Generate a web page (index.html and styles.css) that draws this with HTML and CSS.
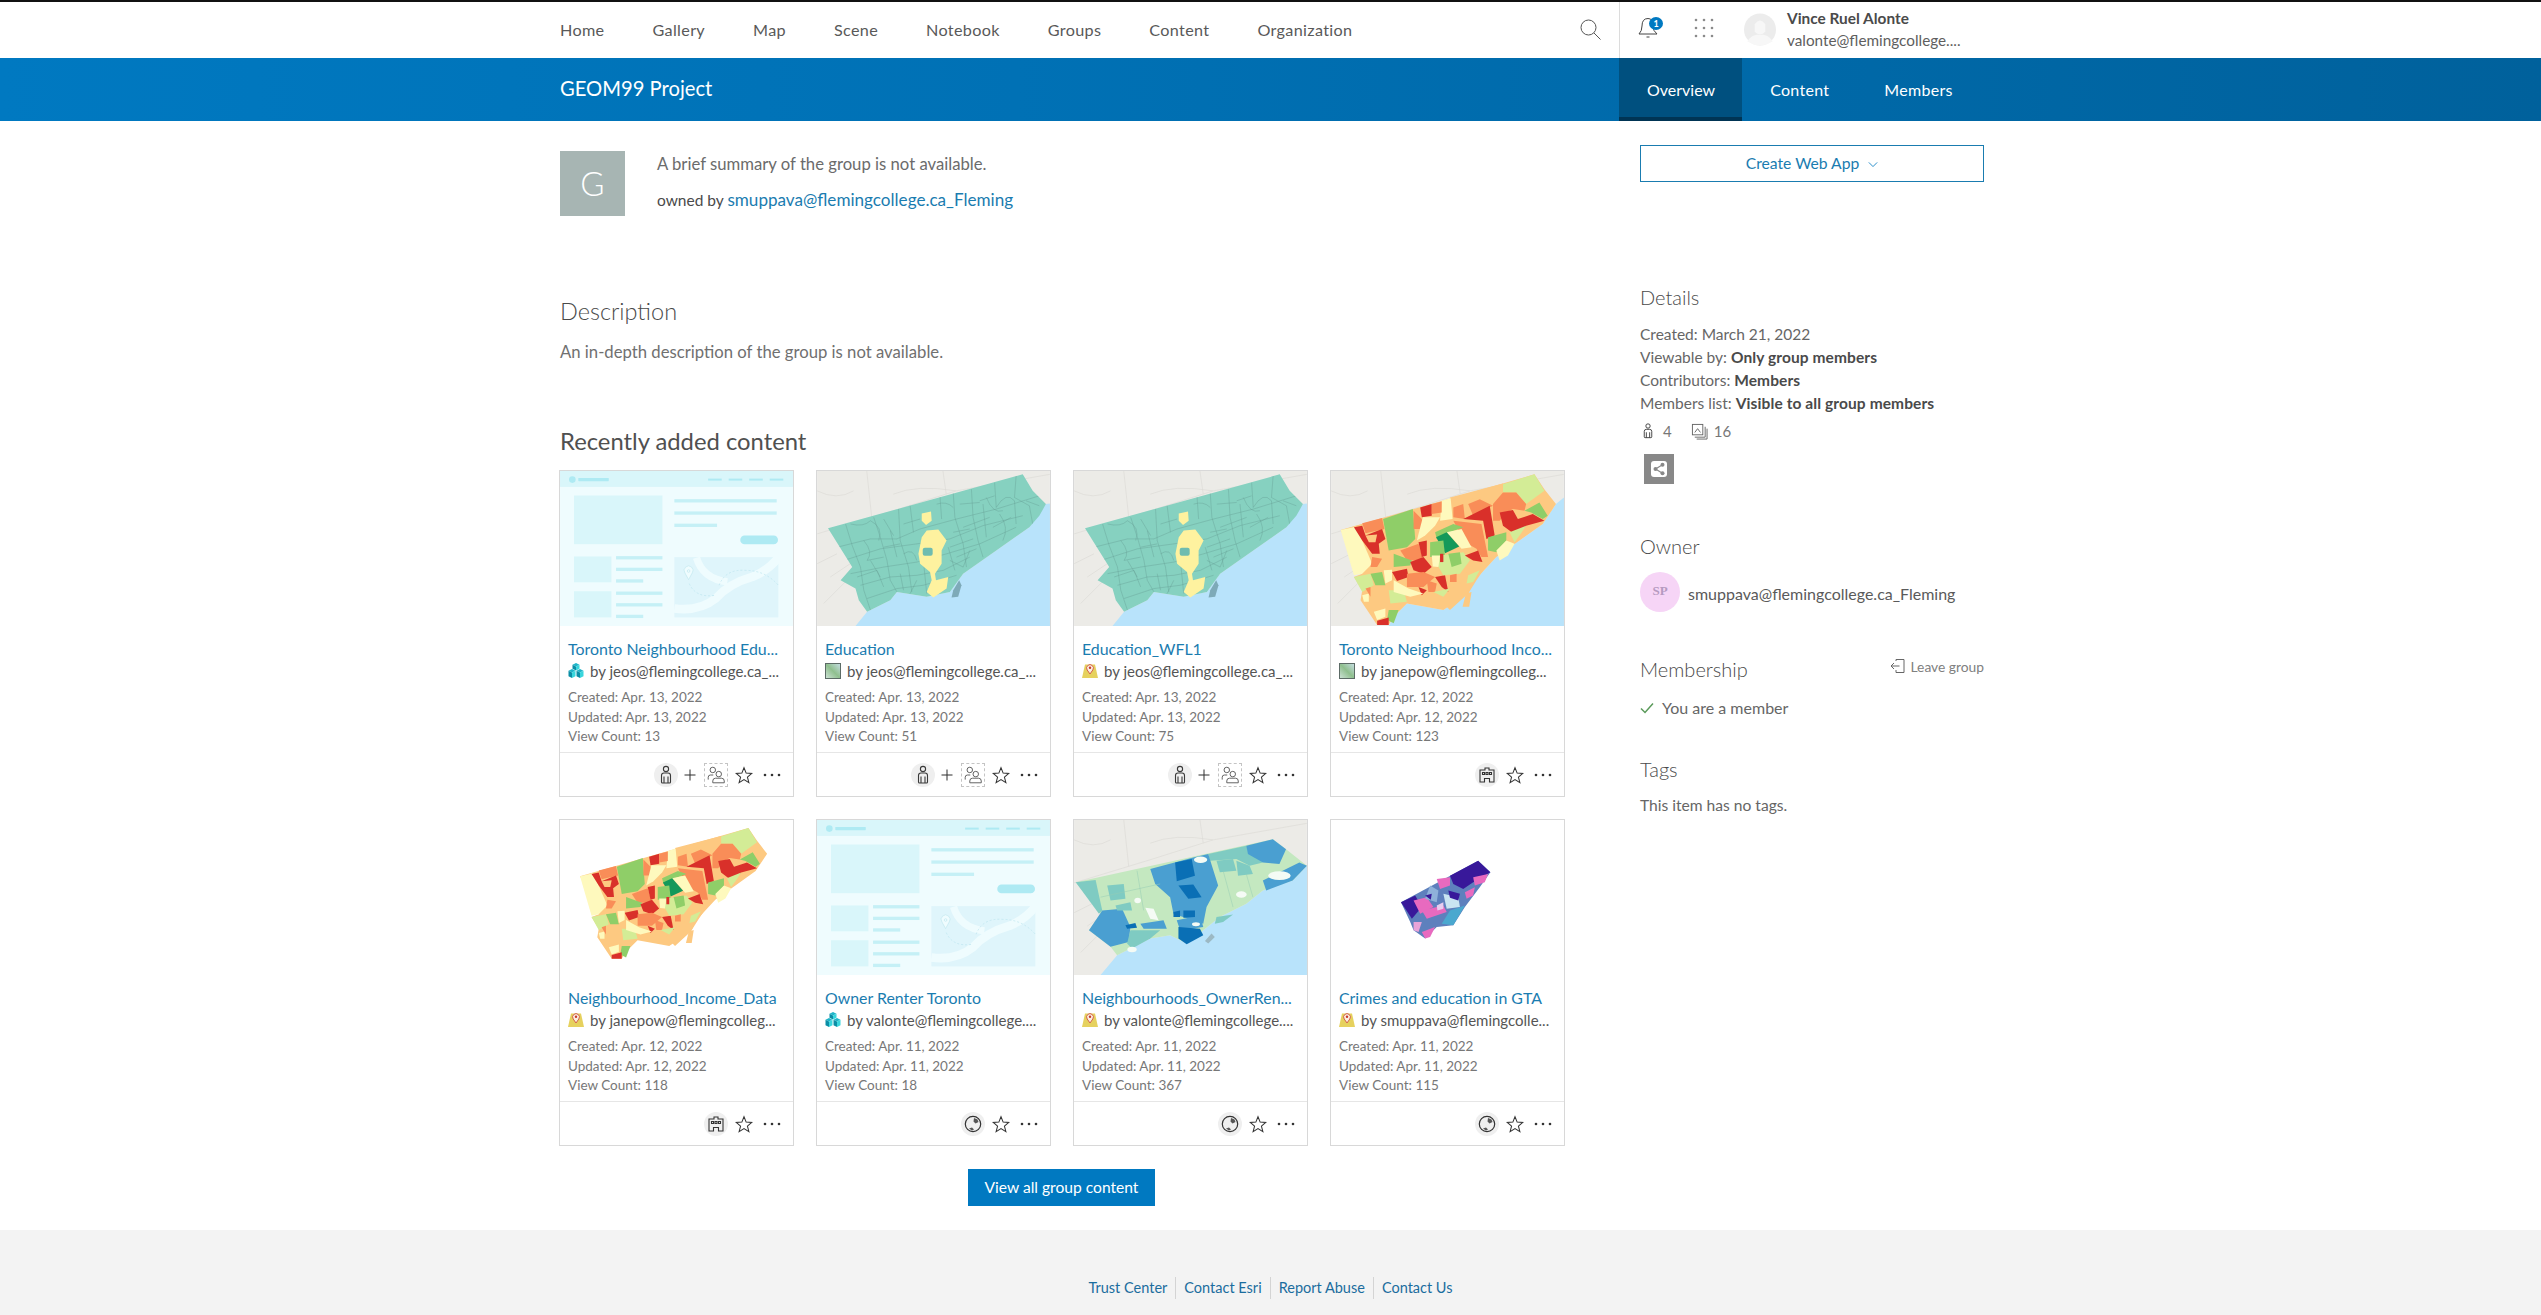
FILE: index.html
```html
<!DOCTYPE html>
<html lang="en">
<head>
<meta charset="utf-8">
<title>GEOM99 Project</title>
<link rel="stylesheet" href="styles.css">
</head>
<body>
<svg class="defs" xmlns="http://www.w3.org/2000/svg" aria-hidden="true">
  <defs>
    <clipPath id="clipGreen"><polygon points="832,203 1420,40 1450,90 1490,130 1470,165 1440,200 1340,270 1240,340 1200,395 1130,410 1040,395 1020,420 950,455 925,420 915,385 870,360 905,320"/></clipPath>
    <linearGradient id="wm" x1="0" y1="1" x2="1" y2="0"><stop offset="0" stop-color="#cfe3d8"/><stop offset=".5" stop-color="#8fbf8e"/><stop offset="1" stop-color="#c8dfe6"/></linearGradient>
  </defs>

  <symbol id="base" viewBox="0 0 703 468">
    <rect width="703" height="468" fill="#ecebe7"/>
    <path d="M150 0 L165 140 M0 190 L230 120 L420 60 L703 10 M230 70 Q300 40 420 60 M380 0 L390 70 M40 320 L130 260 M20 400 L90 330 M0 60 Q60 90 110 60 M0 280 L60 250" stroke="#dcdad6" stroke-width="2" fill="none"/>
  </symbol>

  <symbol id="mapGreen" viewBox="799 30 703 468">
    <use href="#base" x="799" y="30" width="703" height="468"/>
    <polygon fill="#b8e3fb" points="1502,128 1490,130 1440,200 1340,270 1240,340 1200,395 1130,410 1040,395 1020,420 950,455 915,498 1502,498"/>
    <polygon fill="#86d1c0" points="832,203 1420,40 1450,90 1490,130 1470,165 1440,200 1340,270 1240,340 1200,395 1130,410 1040,395 1020,420 950,455 925,420 915,385 870,360 905,320"/>
    <g clip-path="url(#clipGreen)" fill="none" stroke="#659f94" stroke-width="1.200">
      <path d="M860 260 L960 235 L1040 235 L1110 205 L1220 175 L1340 145 L1470 105"/>
      <path d="M880 300 L990 265 L1100 250 L1200 235 L1300 195 L1420 165"/>
      <path d="M900 340 L1000 320 L1100 305 L1190 280 L1290 250 L1400 200"/>
      <path d="M930 375 L1020 350 L1100 345 L1180 330 L1260 290"/>
      <path d="M950 415 L1040 385 L1120 375 L1220 345"/>
      <path d="M885 190 L905 255 L930 320 L940 390 L960 450"/>
      <path d="M970 170 L990 230 L1010 300 L1020 360 L1040 395"/>
      <path d="M1045 145 L1050 240 L1075 320 L1085 395"/>
      <path d="M1210 95 L1215 170 L1240 250 L1250 320"/>
      <path d="M1265 85 L1270 170 L1285 240 L1300 290"/>
      <path d="M1335 65 L1340 140 Q1370 90 1395 120 L1400 190"/>
      <path d="M1400 45 L1395 110 L1440 135 L1450 190"/>
      <path d="M1170 105 L1175 175 M1080 135 L1090 215 M1120 300 L1130 400 M1195 260 L1215 330"/>
      <path d="M900 190 Q940 200 960 180 Q1000 200 985 240 M1310 110 Q1330 160 1360 150"/>
      <path d="M940 240 Q970 275 950 300 L1000 290 M1020 210 L1040 290 M1060 280 Q1090 260 1100 300 M1230 130 L1290 125 M1240 200 L1320 170 M1300 130 L1310 230 M1350 160 Q1380 200 1360 240 M920 350 L980 330 L1000 380 M1000 260 L1050 250 M1200 300 L1240 320 L1260 270 M1100 360 L1080 400 M1160 130 Q1190 120 1210 140"/>
      <path d="M1210 215 L1260 205 M1200 260 L1270 235 M1330 200 L1385 170 M1000 175 L1030 225 M1060 190 L1110 175 M960 300 L990 350 M1050 340 L1060 390 M1220 290 L1280 265 M1430 120 L1470 135 M1290 120 L1335 105"/>
    </g>
    <path fill="#fef29f" d="M1115 158 L1143 152 L1145 180 L1128 193 L1115 180Z M1130 210 L1165 207 L1190 240 L1175 270 L1175 310 L1155 340 L1158 360 L1195 350 L1190 385 L1150 412 L1130 395 L1145 360 L1140 335 L1110 310 L1105 280 L1115 230Z"/>
    <rect x="1118" y="262" width="30" height="24" rx="6" fill="#6fbcb0"/>
    <path fill="#7eaab8" d="M1228 360 L1235 375 L1225 410 L1205 412 L1210 390Z"/>
  </symbol>

  <symbol id="income" viewBox="811 30 703 468">
    <polygon fill="#fdc981" points="840,208 1425,40 1455,85 1490,130 1450,190 1380,240 1310,290 1245,360 1225,400 1150,450 1040,430 1000,470 985,495 950,495 900,420 905,390 880,350 905,340"/>
    <polygon fill="#fef9bd" points="840,208 885,198 905,240 935,310 905,340 880,345"/>
    <polygon fill="#f98d58" points="905,188 965,172 972,205 915,218"/>
    <polygon fill="#d9302a" points="880,200 905,195 915,225 965,205 975,235 955,250 958,280 935,280 905,240"/>
    <polygon fill="#fdc981" points="915,225 950,222 945,245 925,245"/>
    <polygon fill="#8fce68" points="968,175 1058,145 1065,235 1040,260 985,270"/>
    <polygon fill="#d3ec96" points="1330,70 1425,40 1455,90 1400,130 1370,95 1330,95"/>
    <polygon fill="#fdc981" points="1170,110 1330,68 1330,100 1300,135 1260,110 1210,120 1175,145"/>
    <polygon fill="#fef9bd" points="1145,120 1172,112 1178,175 1140,180"/>
    <polygon fill="#d9302a" points="1080,140 1115,130 1115,165 1085,170"/>
    <polygon fill="#f98d58" points="1115,130 1145,122 1145,155 1115,160"/>
    <polygon fill="#f98d58" points="1060,150 1085,175 1090,205 1060,205"/>
    <polygon fill="#fef9bd" points="1088,170 1140,170 1125,195 1095,225 1070,240"/>
    <polygon fill="#f98d58" points="1180,140 1210,130 1215,175 1180,170"/>
    <polygon fill="#f98d58" points="1225,130 1260,115 1300,135 1240,165"/>
    <polygon fill="#f98d58" points="1300,130 1330,95 1370,95 1400,130 1395,150 1360,145 1340,155 1320,180 1300,180"/>
    <polygon fill="#f98d58" points="1180,180 1265,190 1285,290 1265,290 1250,265 1215,245"/>
    <polygon fill="#d9302a" points="1210,175 1290,135 1305,225 1280,235 1270,180"/>
    <polygon fill="#d9302a" points="1320,155 1360,148 1375,175 1420,160 1455,180 1400,195 1370,225 1330,195"/>
    <polygon fill="#8fce68" points="1395,150 1440,125 1465,165 1450,175 1415,155"/>
    <polygon fill="#8fce68" points="1125,215 1180,190 1210,200 1170,215 1130,235"/>
    <polygon fill="#fef9bd" points="1160,215 1205,205 1235,260 1205,265"/>
    <polygon fill="#14995a" points="1128,230 1160,215 1198,258 1155,278"/>
    <polygon fill="#8fce68" points="1285,230 1340,215 1340,240 1310,275 1285,270"/>
    <polygon fill="#8fce68" points="1110,245 1150,240 1155,285 1110,290"/>
    <polygon fill="#f98d58" points="1020,270 1075,250 1090,300 1040,300"/>
    <polygon fill="#d9302a" points="1075,245 1100,240 1100,285 1085,290"/>
    <polygon fill="#8fce68" points="1000,280 1055,300 1050,315 1000,320"/>
    <polygon fill="#d9302a" points="1050,305 1090,290 1115,320 1090,340 1060,330"/>
    <polygon fill="#d9302a" points="995,335 1040,325 1045,350 1010,362"/>
    <polygon fill="#f98d58" points="1040,340 1090,335 1125,350 1090,380 1040,380"/>
    <polygon fill="#d9302a" points="1125,350 1155,345 1165,395 1145,380"/>
    <polygon fill="#d9302a" points="1075,380 1100,390 1085,405"/>
    <polygon fill="#f98d58" points="1100,360 1130,370 1125,395 1105,395"/>
    <polygon fill="#d3ec96" points="1140,285 1210,275 1230,300 1200,340 1150,345 1130,310"/>
    <polygon fill="#8fce68" points="1165,280 1200,275 1205,310 1175,320"/>
    <polygon fill="#fef9bd" points="1115,285 1140,285 1135,320 1118,318"/>
    <polygon fill="#d9302a" points="1215,285 1255,270 1268,305 1240,300"/>
    <polygon fill="#d9302a" points="1140,280 1150,280 1150,305 1140,305"/>
    <polygon fill="#fdc981" points="1230,320 1290,300 1250,360 1225,400 1170,450 1140,420 1165,395 1200,370"/>
    <polygon fill="#d3ec96" points="1225,345 1260,330 1240,365 1220,370"/>
    <polygon fill="#f98d58" points="1170,345 1190,340 1190,365 1170,365"/>
    <polygon fill="#fef9bd" points="1310,270 1340,240 1365,250 1345,285 1320,300"/>
    <polygon fill="#d3ec96" points="1350,215 1400,195 1380,225 1365,245"/>
    <polygon fill="#f98d58" points="935,290 965,295 950,320 930,320"/>
    <polygon fill="#d3ec96" points="880,350 930,340 940,375 905,395"/>
    <polygon fill="#8fce68" points="930,340 965,335 975,375 945,375"/>
    <polygon fill="#fef9bd" points="970,330 995,328 995,360 975,370"/>
    <polygon fill="#d3ec96" points="985,390 1030,390 1040,425 990,430"/>
    <polygon fill="#8fce68" points="985,450 1015,450 1000,490 980,480"/>
    <polygon fill="#fef9bd" points="940,455 975,445 975,470 950,480"/>
    <polygon fill="#d9302a" points="950,482 985,472 985,495 950,495"/>
    <polygon fill="#fef9bd" points="1000,360 1045,385 1090,400 1050,410 1000,395"/>
    <polygon fill="#d3ec96" points="1120,395 1170,385 1150,410"/>
    <polygon fill="#fef9bd" points="905,405 925,400 925,425 910,425"/>
    <polygon fill="#f98d58" points="915,385 930,380 930,410"/>
    <polygon fill="#fdc981" points="1218,400 1235,395 1228,440 1208,440"/>
  </symbol>

  <symbol id="mapIncome" viewBox="811 30 703 468">
    <use href="#base" x="811" y="30" width="703" height="468"/>
    <polygon fill="#b8e3fb" points="1514,110 1490,130 1450,190 1380,240 1310,290 1245,360 1225,400 1150,450 1040,430 1000,470 985,498 1514,498"/>
    <use href="#income" x="811" y="30" width="703" height="468"/>
  </symbol>

  <symbol id="mapBlue" viewBox="40 27 703 468">
    <use href="#base" x="40" y="27" width="703" height="468"/>
    <polygon fill="#b8e3fb" points="743,165 700,210 610,240 560,280 480,320 430,360 380,400 330,375 270,385 200,420 170,435 120,495 743,495"/>
    <polygon fill="#c4e8c0" points="45,215 640,85 680,115 743,165 700,210 610,240 560,280 480,320 430,360 380,400 330,375 270,385 200,420 170,435 150,410 85,360 120,310"/>
    <polygon fill="#7fcbc2" points="45,215 105,208 125,300 115,310"/>
    <polygon fill="#7fcbc2" points="445,130 560,105 610,155 570,165 530,145 450,150"/>
    <polygon fill="#4a9fd1" points="560,105 640,85 680,115 660,160 610,155 565,130"/>
    <polygon fill="#4a9fd1" points="610,210 720,155 743,165 700,210 620,240"/>
    <polygon fill="#7fcbc2" points="530,150 570,165 580,190 535,195"/>
    <polygon fill="#7fcbc2" points="470,150 520,145 530,180 480,185"/>
    <polygon fill="#4a9fd1" points="270,175 400,140 445,130 475,225 440,290 430,340 340,310 330,260 285,220"/>
    <polygon fill="#0a6fb5" points="345,155 395,145 405,195 350,212"/>
    <polygon fill="#0a6fb5" points="355,225 400,222 425,260 385,265"/>
    <polygon fill="#4a9fd1" points="85,360 125,300 185,295 210,350 205,395 150,410"/>
    <polygon fill="#7fcbc2" points="210,360 300,360 270,385 215,415 200,400"/>
    <polygon fill="#0a6fb5" points="195,345 225,338 230,352 200,355"/>
    <polygon fill="#4a9fd1" points="240,340 310,330 320,355 250,355"/>
    <polygon fill="#7fcbc2" points="140,225 190,220 195,265 150,270"/>
    <polygon fill="#7fcbc2" points="165,285 210,275 215,300 170,300"/>
    <polygon fill="#4a9fd1" points="350,330 420,315 430,350 360,360"/>
    <polygon fill="#0a6fb5" points="340,305 360,300 360,320 340,320"/>
    <polygon fill="#0a6fb5" points="370,300 405,300 405,320 370,322"/>
    <polygon fill="#0a6fb5" points="355,350 420,355 430,375 380,402 355,385"/>
    <polygon fill="#7fcbc2" points="470,320 520,312 490,335 465,340"/>
    <g fill="#f5fbf5"><ellipse cx="660" cy="195" rx="34" ry="13"/><ellipse cx="422" cy="147" rx="20" ry="10"/><ellipse cx="545" cy="252" rx="16" ry="10"/><ellipse cx="232" cy="270" rx="10" ry="8"/><path d="M255 292 L280 295 L295 330 L270 325Z"/><ellipse cx="215" cy="418" rx="14" ry="8"/><ellipse cx="408" cy="342" rx="12" ry="6"/></g>
    <path d="M120 260 L300 220 M230 180 L250 300 M490 180 L520 290 M560 190 L580 260" stroke="#96ccb4" stroke-width="1.500" fill="none"/>
    <path fill="#9cb9c4" d="M455 370 L465 380 L445 400 L435 392Z"/>
  </symbol>

  <symbol id="mapPurple" viewBox="811 27 703 468">
    <polygon fill="#5e80bd" points="1022,275 1255,150 1292,185 1260,230 1215,290 1180,345 1130,350 1095,385 1060,360 1050,335"/>
    <polygon fill="#38189a" points="1022,275 1065,255 1085,290 1055,325"/>
    <polygon fill="#38189a" points="1170,195 1255,150 1292,185 1240,215 1210,235 1180,220"/>
    <polygon fill="#e86abf" points="1240,200 1285,190 1275,215 1245,225"/>
    <polygon fill="#e86abf" points="1060,270 1100,260 1120,290 1080,310"/>
    <polygon fill="#e86abf" points="1130,205 1170,200 1170,225 1140,235"/>
    <polygon fill="#c9e5f2" points="1150,250 1195,260 1200,290 1160,295"/>
    <polygon fill="#38189a" points="1165,240 1200,250 1195,270 1170,262"/>
    <polygon fill="#e86abf" points="1085,300 1150,285 1160,305 1100,325"/>
    <polygon fill="#4aa8cf" points="1170,300 1215,285 1180,345 1145,340"/>
    <polygon fill="#e86abf" points="1085,365 1125,350 1110,380 1095,385"/>
    <polygon fill="#e8a3d8" points="1060,335 1085,335 1075,365 1060,360"/>
    <polygon fill="#8fb1da" points="1110,225 1135,240 1130,275 1095,265"/>
    <polygon fill="#e86abf" points="1215,245 1245,230 1240,255 1220,265"/>
    <polygon fill="#e9cdf0" points="1130,285 1150,275 1150,295 1132,300"/>
    <polygon fill="#38189a" points="1095,255 1115,250 1112,268"/>
  </symbol>

  <symbol id="appThumb" viewBox="0 0 703 468">
    <rect width="703" height="468" fill="#effcfe"/>
    <rect width="703" height="48" fill="#d9f6fa"/>
    <circle cx="37" cy="26" r="10" fill="#aeeaf3"/>
    <g fill="#aeeaf3">
      <rect x="55" y="21" width="92" height="10" rx="2"/><rect x="447" y="23" width="41" height="6"/><rect x="509" y="23" width="41" height="6"/><rect x="571" y="23" width="41" height="6"/><rect x="633" y="23" width="41" height="6"/>
      <rect x="544" y="195" width="114" height="26" rx="13"/>
    </g>
    <g fill="#d9f6fa">
      <rect x="42" y="74" width="267" height="147"/><rect x="42" y="258" width="113" height="78"/><rect x="42" y="363" width="113" height="79"/>
    </g>
    <g fill="#c5f0f6">
      <rect x="345" y="85" width="309" height="10"/><rect x="345" y="122" width="309" height="10"/><rect x="345" y="159" width="129" height="10"/>
      <rect x="169" y="257" width="140" height="10"/><rect x="169" y="292" width="140" height="10"/><rect x="169" y="327" width="82" height="10"/>
      <rect x="169" y="364" width="140" height="10"/><rect x="169" y="399" width="140" height="10"/><rect x="169" y="434" width="82" height="10"/>
    </g>
    <rect x="345" y="260" width="314" height="182" fill="#dff5fb"/>
    <path d="M345 415 Q420 425 470 385 Q510 340 580 320 Q630 300 662 258" fill="none" stroke="#effcfe" stroke-width="26"/>
    <path d="M505 335 Q430 325 412 262" fill="none" stroke="#effcfe" stroke-width="22"/>
    <path d="M390 340 Q410 385 470 375 M480 345 Q500 295 560 300 Q620 300 659 345" fill="none" stroke="#b9e4ef" stroke-width="2" stroke-dasharray="6 6"/>
    <path d="M388 328 L377 308 A13.500 13.500 0 1 1 399 308Z" fill="#effcfe" stroke="#bfe6ee" stroke-width="2"/>
    <circle cx="388" cy="302" r="4" fill="none" stroke="#bfe6ee" stroke-width="2"/>
  </symbol>

  <symbol id="iCubes" viewBox="0 0 16 16">
    <path fill="#1fb5c9" d="M8 0 L11.500 1.800 L8 3.600 L4.500 1.800Z M4 6 L7.500 7.800 L4 9.600 L0.500 7.800Z M12 6 L15.500 7.800 L12 9.600 L8.500 7.800Z"/>
    <path fill="#0a8ea6" d="M4.500 1.800 L8 3.600 V7.500 L4.500 5.700Z M0.500 7.800 L4 9.600 V15 L0.500 13.200Z M8.500 7.800 L12 9.600 V15 L8.500 13.200Z"/>
    <path fill="#38d6dd" d="M11.500 1.800 V5.700 L8 7.500 V3.600Z M7.500 7.800 V13.200 L4 15 V9.600Z M15.500 7.800 V13.200 L12 15 V9.600Z"/>
  </symbol>
  <symbol id="iWebmap" viewBox="0 0 16 16">
    <rect x="0.500" y="0.500" width="15" height="15" fill="url(#wm)" stroke="#5c6b66"/>
  </symbol>
  <symbol id="iFeature" viewBox="0 0 16 16">
    <path fill="#e6d15e" d="M3 1.500 H13 L16 15 H0Z"/>
    <path fill="#fbeee0" stroke="#d2604a" d="M8 11 L5.200 7 A3.400 3.400 0 1 1 10.800 7Z"/>
    <circle cx="8" cy="4.800" r="1.200" fill="#c8382c"/>
  </symbol>

  <symbol id="iUser" viewBox="0 0 24 24">
    <g fill="none" stroke="#3a3a3a" stroke-width="1.100">
      <circle cx="12" cy="6" r="2.600"/>
      <path d="M7.500 19 V12.500 A2.500 2.500 0 0 1 10 10 H14 A2.500 2.500 0 0 1 16.500 12.500 V19 A1 1 0 0 1 15.500 20 H8.500 A1 1 0 0 1 7.500 19Z M10 13.500 V20 M14 13.500 V20"/>
    </g>
  </symbol>
  <symbol id="iPlus" viewBox="0 0 24 24"><path d="M12 6.500 V17.500 M6.500 12 H17.500" stroke="#2f2f2f" stroke-width="1" fill="none"/></symbol>
  <symbol id="iGroup" viewBox="0 0 24 24">
    <g fill="none" stroke="#555" stroke-width="1">
      <circle cx="8.500" cy="6.500" r="3"/><circle cx="15" cy="11" r="3"/>
      <path d="M3.500 17 V14.500 A2.500 2.500 0 0 1 6 12 H9 M8.500 20.500 V18.500 A3 3 0 0 1 11.500 15.500 H18 A3 3 0 0 1 21 18.500 V20.500Z"/>
    </g>
  </symbol>
  <symbol id="iStar" viewBox="-2 -2 28 28"><path d="M12 3.500 L14.500 9.800 L21 10.200 L16 14.500 L17.700 21 L12 17.300 L6.300 21 L8 14.500 L3 10.200 L9.500 9.800Z" fill="none" stroke="#333" stroke-width="1.200"/></symbol>
  <symbol id="iDots" viewBox="0 0 24 24"><g fill="#333"><circle cx="5" cy="12" r="1.300"/><circle cx="12" cy="12" r="1.300"/><circle cx="19" cy="12" r="1.300"/></g></symbol>
  <symbol id="iOrg" viewBox="0 0 24 24">
    <g fill="none" stroke="#333" stroke-width="1.100">
      <path d="M5 19 V7 H10 V5 H14 V7 H19 V19 H14.500 V15.500 H9.500 V19Z"/>
      <path d="M7.500 9.500 H9.500 V11.500 H7.500Z M11 9.500 H13 V11.500 H11Z M14.500 9.500 H16.500 V11.500 H14.500Z"/>
    </g>
  </symbol>
  <symbol id="iGlobe" viewBox="0 0 24 24">
    <circle cx="12" cy="12" r="7.700" fill="none" stroke="#333" stroke-width="1.200"/>
    <path d="M13 6 L16.500 7.500 L17.500 10 L14.500 11.500 L12.500 9.500Z M8 16.500 L11 15.500 L13 17.500 L11 18.500Z" fill="#555"/>
  </symbol>
  <symbol id="iStack" viewBox="0 0 18 18">
    <g fill="none" stroke="#666" stroke-width="1">
      <rect x="1.500" y="1.500" width="11" height="11"/>
      <path d="M4 10 L7 6 L10 10 M15 4 V15 H4 M17 6 V17 H6"/>
    </g>
  </symbol>
</svg>

<header class="topbar">
  <div class="wrap topbar-inner">
    <nav class="mainnav">
      <a class="navlink">Home</a>
      <a class="navlink">Gallery</a>
      <a class="navlink">Map</a>
      <a class="navlink">Scene</a>
      <a class="navlink">Notebook</a>
      <a class="navlink">Groups</a>
      <a class="navlink">Content</a>
      <a class="navlink">Organization</a>
    </nav>
    <div class="tools">
      <svg class="search" viewBox="0 0 21 21"><circle cx="8.500" cy="8.500" r="7.500" fill="none" stroke="#555" stroke-width="1"/><path d="M14 14 L20.500 20.500" stroke="#555" stroke-width="1"/></svg>
      <div class="usertools">
        <div class="bell">
          <svg viewBox="0 0 20 24" class="bell-icon"><path d="M1 18 Q4 15 4 10 Q4 2.500 10 2.500 Q15 2.500 15 10 Q15 15 19 18Z M8.500 21 H11.500" fill="none" stroke="#444" stroke-width="1"/></svg>
          <span class="badge">1</span>
        </div>
        <svg class="apps" viewBox="0 0 20 20"><g fill="#8a8a8a"><circle cx="2" cy="2" r="1.300"/><circle cx="10" cy="2" r="1.300"/><circle cx="18" cy="2" r="1.300"/><circle cx="2" cy="10" r="1.300"/><circle cx="10" cy="10" r="1.300"/><circle cx="18" cy="10" r="1.300"/><circle cx="2" cy="18" r="1.300"/><circle cx="10" cy="18" r="1.300"/><circle cx="18" cy="18" r="1.300"/></g></svg>
        <svg class="avatar" viewBox="0 0 30 30"><circle cx="15" cy="15" r="15" fill="#ececec"/><path d="M10 10 Q15 3 20 10 L20 17 Q15 22 10 17Z M3 26 Q8 20 12 20 H18 Q22 20 27 26 Q15 34 3 26Z" fill="#f7f7f7"/></svg>
        <div class="userinfo">
          <div class="username">Vince Ruel Alonte</div>
          <div class="useremail">valonte@flemingcollege....</div>
        </div>
      </div>
    </div>
  </div>
</header>

<div class="band">
  <div class="wrap band-inner">
    <h1 class="grouptitle">GEOM99 Project</h1>
    <nav class="tabs">
      <a class="tab tab-active">Overview</a>
      <a class="tab">Content</a>
      <a class="tab">Members</a>
    </nav>
  </div>
</div>

<main class="wrap main">
  <div class="leftcol">
    <section class="summary">
      <div class="gthumb">G</div>
      <div class="summary-text">
        <p class="summary-line">A brief summary of the group is not available.</p>
        <p class="owned">owned by <a class="link">smuppava@flemingcollege.ca_Fleming</a></p>
      </div>
    </section>
    <h2 class="h-desc">Description</h2>
    <p class="desc">An in-depth description of the group is not available.</p>
    <h2 class="h-recent">Recently added content</h2>

    <div class="cards">
      <article class="card">
        <svg class="thumb"><use href="#appThumb"/></svg>
        <div class="card-body">
          <div class="card-title">Toronto Neighbourhood Edu...</div>
          <div class="card-by"><svg class="type"><use href="#iCubes"/></svg><span class="by">by jeos@flemingcollege.ca_...</span></div>
          <div class="meta first">Created: Apr. 13, 2022</div>
          <div class="meta">Updated: Apr. 13, 2022</div>
          <div class="meta last">View Count: 13</div>
        </div>
        <div class="actions">
          <span class="circ"><svg class="ai"><use href="#iUser"/></svg></span>
          <svg class="ai ai-plus"><use href="#iPlus"/></svg>
          <span class="dash"><svg class="ai"><use href="#iGroup"/></svg></span>
          <svg class="ai"><use href="#iStar"/></svg>
          <svg class="ai"><use href="#iDots"/></svg>
        </div>
      </article>
      <article class="card">
        <svg class="thumb"><use href="#mapGreen"/></svg>
        <div class="card-body">
          <div class="card-title">Education</div>
          <div class="card-by"><svg class="type"><use href="#iWebmap"/></svg><span class="by">by jeos@flemingcollege.ca_...</span></div>
          <div class="meta first">Created: Apr. 13, 2022</div>
          <div class="meta">Updated: Apr. 13, 2022</div>
          <div class="meta last">View Count: 51</div>
        </div>
        <div class="actions">
          <span class="circ"><svg class="ai"><use href="#iUser"/></svg></span>
          <svg class="ai ai-plus"><use href="#iPlus"/></svg>
          <span class="dash"><svg class="ai"><use href="#iGroup"/></svg></span>
          <svg class="ai"><use href="#iStar"/></svg>
          <svg class="ai"><use href="#iDots"/></svg>
        </div>
      </article>
      <article class="card">
        <svg class="thumb"><use href="#mapGreen"/></svg>
        <div class="card-body">
          <div class="card-title">Education_WFL1</div>
          <div class="card-by"><svg class="type"><use href="#iFeature"/></svg><span class="by">by jeos@flemingcollege.ca_...</span></div>
          <div class="meta first">Created: Apr. 13, 2022</div>
          <div class="meta">Updated: Apr. 13, 2022</div>
          <div class="meta last">View Count: 75</div>
        </div>
        <div class="actions">
          <span class="circ"><svg class="ai"><use href="#iUser"/></svg></span>
          <svg class="ai ai-plus"><use href="#iPlus"/></svg>
          <span class="dash"><svg class="ai"><use href="#iGroup"/></svg></span>
          <svg class="ai"><use href="#iStar"/></svg>
          <svg class="ai"><use href="#iDots"/></svg>
        </div>
      </article>
      <article class="card">
        <svg class="thumb"><use href="#mapIncome"/></svg>
        <div class="card-body">
          <div class="card-title">Toronto Neighbourhood Inco...</div>
          <div class="card-by"><svg class="type"><use href="#iWebmap"/></svg><span class="by">by janepow@flemingcolleg...</span></div>
          <div class="meta first">Created: Apr. 12, 2022</div>
          <div class="meta">Updated: Apr. 12, 2022</div>
          <div class="meta last">View Count: 123</div>
        </div>
        <div class="actions">
          <span class="circ"><svg class="ai"><use href="#iOrg"/></svg></span>
          <svg class="ai"><use href="#iStar"/></svg>
          <svg class="ai"><use href="#iDots"/></svg>
        </div>
      </article>
      <article class="card">
        <svg class="thumb" viewBox="0 0 703 468"><use href="#income" x="35" y="15" width="611" height="407"/></svg>
        <div class="card-body">
          <div class="card-title">Neighbourhood_Income_Data</div>
          <div class="card-by"><svg class="type"><use href="#iFeature"/></svg><span class="by">by janepow@flemingcolleg...</span></div>
          <div class="meta first">Created: Apr. 12, 2022</div>
          <div class="meta">Updated: Apr. 12, 2022</div>
          <div class="meta last">View Count: 118</div>
        </div>
        <div class="actions">
          <span class="circ"><svg class="ai"><use href="#iOrg"/></svg></span>
          <svg class="ai"><use href="#iStar"/></svg>
          <svg class="ai"><use href="#iDots"/></svg>
        </div>
      </article>
      <article class="card">
        <svg class="thumb"><use href="#appThumb"/></svg>
        <div class="card-body">
          <div class="card-title">Owner Renter Toronto</div>
          <div class="card-by"><svg class="type"><use href="#iCubes"/></svg><span class="by">by valonte@flemingcollege....</span></div>
          <div class="meta first">Created: Apr. 11, 2022</div>
          <div class="meta">Updated: Apr. 11, 2022</div>
          <div class="meta last">View Count: 18</div>
        </div>
        <div class="actions">
          <span class="circ"><svg class="ai"><use href="#iGlobe"/></svg></span>
          <svg class="ai"><use href="#iStar"/></svg>
          <svg class="ai"><use href="#iDots"/></svg>
        </div>
      </article>
      <article class="card">
        <svg class="thumb"><use href="#mapBlue"/></svg>
        <div class="card-body">
          <div class="card-title">Neighbourhoods_OwnerRen...</div>
          <div class="card-by"><svg class="type"><use href="#iFeature"/></svg><span class="by">by valonte@flemingcollege....</span></div>
          <div class="meta first">Created: Apr. 11, 2022</div>
          <div class="meta">Updated: Apr. 11, 2022</div>
          <div class="meta last">View Count: 367</div>
        </div>
        <div class="actions">
          <span class="circ"><svg class="ai"><use href="#iGlobe"/></svg></span>
          <svg class="ai"><use href="#iStar"/></svg>
          <svg class="ai"><use href="#iDots"/></svg>
        </div>
      </article>
      <article class="card">
        <svg class="thumb"><use href="#mapPurple"/></svg>
        <div class="card-body">
          <div class="card-title">Crimes and education in GTA</div>
          <div class="card-by"><svg class="type"><use href="#iFeature"/></svg><span class="by">by smuppava@flemingcolle...</span></div>
          <div class="meta first">Created: Apr. 11, 2022</div>
          <div class="meta">Updated: Apr. 11, 2022</div>
          <div class="meta last">View Count: 115</div>
        </div>
        <div class="actions">
          <span class="circ"><svg class="ai"><use href="#iGlobe"/></svg></span>
          <svg class="ai"><use href="#iStar"/></svg>
          <svg class="ai"><use href="#iDots"/></svg>
        </div>
      </article>
    </div>
    <div class="viewall-row"><a class="viewall">View all group content</a></div>
  </div>

  <aside class="rightcol">
    <a class="createapp">Create Web App <svg class="chev" viewBox="0 0 12 8"><path d="M1 1.500 L6 6.500 L11 1.500" fill="none" stroke="#0079c1" stroke-width="1"/></svg></a>
    <h3 class="sidehead details-head">Details</h3>
    <div class="facts">
      <div>Created: March 21, 2022</div>
      <div>Viewable by: <b class="strong">Only group members</b></div>
      <div>Contributors: <b class="strong">Members</b></div>
      <div>Members list: <b class="strong">Visible to all group members</b></div>
    </div>
    <div class="counts">
      <svg class="count-icon"><use href="#iUser"/></svg><span class="count-num">4</span>
      <svg class="count-icon stack"><use href="#iStack"/></svg><span class="count-num">16</span>
    </div>
    <div class="share"><svg viewBox="0 0 16 16" class="share-icon"><rect width="16" height="16" rx="3" fill="#fff"/><g fill="#888"><circle cx="11.500" cy="3.800" r="2"/><circle cx="11.500" cy="12.200" r="2"/><circle cx="4.500" cy="8" r="2"/></g><path d="M11.500 3.800 L4.500 8 L11.500 12.200" stroke="#888" stroke-width="1.200" fill="none"/></svg></div>
    <h3 class="sidehead owner-head">Owner</h3>
    <div class="owner">
      <div class="owner-av">SP</div>
      <span class="owner-name">smuppava@flemingcollege.ca_Fleming</span>
    </div>
    <div class="member-head">
      <h3 class="sidehead">Membership</h3>
      <a class="leave"><svg class="leave-icon" viewBox="0 0 16 16"><path d="M6 3 V1.500 H14 V14.500 H6 V12 M9.500 8 H1 M4 5 L1 8 L4 11" fill="none" stroke="#666" stroke-width="1"/></svg>Leave group</a>
    </div>
    <div class="member-line"><svg class="check" viewBox="0 0 14 12"><path d="M1 6.500 L5 10.500 L13 1.500" fill="none" stroke="#5a9a5a" stroke-width="1.500"/></svg>You are a member</div>
    <h3 class="sidehead tags-head">Tags</h3>
    <p class="notags">This item has no tags.</p>
  </aside>
</main>

<footer class="footer">
  <a class="flink">Trust Center</a>
  <a class="flink">Contact Esri</a>
  <a class="flink">Report Abuse</a>
  <a class="flink">Contact Us</a>
</footer>
</body>
</html>
```

FILE: styles.css
```css
* { box-sizing: border-box; }
html, body { margin: 0; padding: 0; }
body {
  font-family: "Lato", "Liberation Sans", sans-serif;
  color: #4a4a4a;
  background: #fff;
  overflow-x: hidden;
}
.defs { display: block; width: 0; height: 0; overflow: hidden; }
.wrap { width: 1421px; margin: 0 auto; }
h1, h2, h3, p { margin: 0; font-weight: 400; }

/* top bar */
.topbar { height: 58px; border-top: 2px solid #111; background: #fff; }
.topbar-inner { display: flex; height: 56px; }
.mainnav { width: 1020px; display: flex; gap: 48px; align-items: center; padding-bottom: 2px; }
.navlink { font-size: 16.200px; font-weight: 400; color: #595959; letter-spacing: .33px; }
.tools { display: flex; align-items: stretch; }
.search { width: 21px; height: 21px; margin-top: 17px; }
.usertools { display: flex; margin-left: 18px; border-left: 1px solid #dcdcdc; padding-left: 18px; }
.bell { position: relative; width: 20px; margin-top: 14px; }
.bell-icon { display: block; width: 20px; height: 24px; }
.badge {
  position: absolute; left: 11px; top: 1px; width: 14px; height: 13px; border-radius: 50%;
  background: #0079c1; color: #fff; font-size: 9px; font-weight: 700; line-height: 13px; text-align: center;
}
.apps { width: 20px; height: 20px; margin: 16px 0 0 36px; }
.avatar { width: 32px; height: 33px; margin: 11px 0 0 30px; }
.userinfo { margin-left: 11px; padding-top: 5px; }
.username { font-size: 15.400px; font-weight: 700; color: #4a4a4a; line-height: 22px; }
.useremail { font-size: 15.300px; font-weight: 400; color: #5e5e5e; line-height: 22px; }

/* band */
.band { height: 63px; background: linear-gradient(90deg, #0079c1 0%, #0071b5 40%, #00619c 100%); }
.band-inner { display: flex; height: 63px; }
.grouptitle { width: 1059px; font-size: 20.200px; font-weight: 400; line-height: 61px; color: #fff; }
.tabs { display: flex; }
.tab { padding: 0 27px 0 28px; font-size: 16px; font-weight: 400; color: #fff; line-height: 63px; letter-spacing: .3px; }
.tab-active { background: #00507f; border-bottom: 4px solid #003454; letter-spacing: 0; }

/* main */
.main { display: flex; }
.leftcol { width: 1080px; padding-top: 30px; padding-bottom: 24px; }
.summary { display: flex; }
.gthumb { width: 65px; height: 65px; background: #a7b5b3; color: #fff; font-size: 33px; font-weight: 300; line-height: 65px; text-align: center; }
.summary-text { margin-left: 32px; }
.summary-line { font-size: 16.700px; font-weight: 400; color: #6b6b6b; line-height: 26px; }
.owned { font-size: 15.500px; font-weight: 400; color: #4a4a4a; line-height: 26px; margin-top: 10px; }
.link { color: #1a7cb0; font-size: 17.100px; }
.h-desc { margin-top: 80px; font-size: 23.500px; font-weight: 300; line-height: 30px; color: #4a4a4a; }
.desc { margin-top: 15px; font-size: 16.700px; font-weight: 400; line-height: 22px; color: #707070; }
.h-recent { margin-top: 62px; font-size: 23.800px; font-weight: 400; line-height: 32px; color: #505050; }

/* cards */
.cards { margin: 13px 0 0 -1px; display: grid; grid-template-columns: repeat(4, 235px); gap: 22px; }
.card { height: 327px; border: 1px solid #d8d8d8; background: #fff; display: flex; flex-direction: column; }
.thumb { display: block; width: 233px; height: 155px; flex: none; filter: blur(.4px); }
.card-body { padding: 12px 8px 0; height: 126px; flex: none; }
.card-title { font-size: 15.900px; line-height: 22px; color: #1a7cb0; white-space: nowrap; }
.card-by { display: flex; align-items: center; gap: 6px; height: 22px; }
.type { width: 16px; height: 16px; flex: none; }
.by { font-size: 15px; color: #555; white-space: nowrap; font-weight: 400; }
.meta { font-size: 13.500px; font-weight: 400; color: #777; line-height: 19.500px; }
.meta.first { margin-top: 6px; }
.actions { flex: none; border-top: 1px solid #e6e6e6; height: 44px; display: flex; justify-content: flex-end; align-items: center; padding-right: 9px; gap: 4px; }
.ai { width: 24px; height: 24px; display: block; flex: none; }
.ai-plus { margin: 0 -2px 0 -4px; }
.circ { width: 24px; height: 24px; border-radius: 50%; background: #efefef; display: block; }
.dash { width: 24px; height: 24px; display: block; border: 1px dashed #c4c4c4; }
.dash .ai { width: 22px; height: 22px; }
.viewall-row { width: 1006px; display: flex; justify-content: center; margin-top: 23px; }
.viewall { display: block; width: 187px; height: 37px; background: #0079c1; color: #fff; font-size: 15.600px; line-height: 36px; text-align: center; margin-right: 3px; }

/* right column */
.rightcol { width: 341px; padding-top: 24px; }
.createapp { display: block; width: 344px; height: 37px; border: 1px solid #1a7cb0; color: #1a7cb0; font-size: 15.700px; line-height: 35px; text-align: center; font-weight: 400; }
.chev { width: 10px; height: 7px; margin-left: 5px; vertical-align: 1px; }
.sidehead { font-size: 20px; font-weight: 300; line-height: 28px; color: #4a4a4a; }
.details-head { margin-top: 101px; }
.facts { margin-top: 12px; font-size: 15.500px; font-weight: 400; line-height: 23px; color: #666; }
.facts > div { height: 23px; }
.strong { font-weight: 700; color: #4a4a4a; letter-spacing: .1px; }
.counts { margin-top: 6px; height: 20px; display: flex; align-items: center; font-size: 15px; font-weight: 400; color: #777; }
.count-icon { width: 20px; height: 20px; margin-left: -2px; }
.count-icon.stack { width: 17px; height: 17px; margin-left: 19px; margin-right: 1px; }
.count-num { margin-left: 5px; }
.share { margin: 13px 0 0 4px; width: 30px; height: 30px; background: #888; display: flex; align-items: center; justify-content: center; }
.share-icon { width: 16px; height: 16px; }
.owner-head { margin-top: 48px; }
.owner { margin-top: 12px; display: flex; align-items: center; gap: 8px; }
.owner-av { width: 40px; height: 40px; border-radius: 50%; background: #f6d5f6; color: #b59ac0; font-family: "Liberation Serif", serif; font-size: 13px; line-height: 38px; text-align: center; font-weight: 700; }
.owner-name { font-size: 16px; font-weight: 400; color: #5a5a5a; padding-top: 2px; }
.member-head { margin-top: 43px; display: flex; justify-content: space-between; width: 344px; }
.leave { display: flex; align-items: center; height: 22px; font-size: 13.800px; color: #808080; gap: 5px; }
.leave-icon { width: 16px; height: 16px; }
.member-line { margin-top: 14px; display: flex; align-items: center; gap: 8px; font-size: 16px; font-weight: 400; color: #666; line-height: 22px; }
.check { width: 14px; height: 12px; }
.tags-head { margin-top: 36px; }
.notags { margin-top: 11px; font-size: 15.600px; font-weight: 400; line-height: 22px; color: #666; }

/* footer */
.footer { height: 85px; background: #f3f3f3; display: flex; justify-content: center; align-items: flex-start; padding-top: 47px; }
.flink { font-size: 14.500px; color: #1b6d9e; line-height: 22px; padding: 0 8px; border-left: 1px solid #d4d4d4; }
.flink:first-child { border-left: 0; }
```
